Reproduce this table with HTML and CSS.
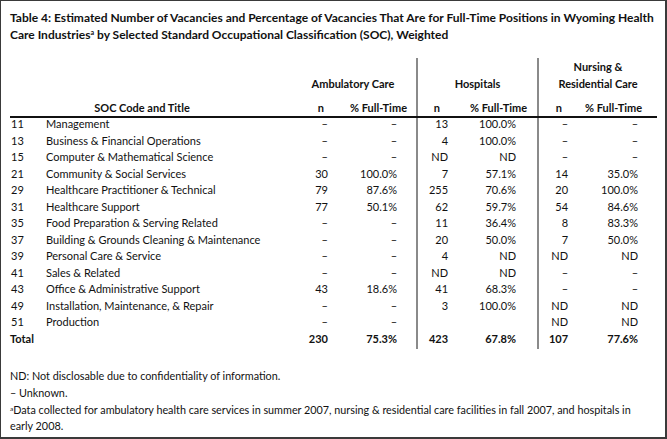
FILE: index.html
```html
<!DOCTYPE html>
<html lang="en">
<head>
<meta charset="utf-8">
<title>Table 4</title>
<link rel="stylesheet" href="styles.css">
</head>
<body>
<div class="frame">
  <h1 class="title">Table 4: Estimated Number of Vacancies and Percentage of Vacancies That Are for Full-Time Positions in Wyoming Health<br>Care Industries<sup>a</sup> by Selected Standard Occupational Classification (SOC), Weighted</h1>
  <table class="data">
    <colgroup>
      <col class="c-code"><col class="c-title"><col class="c-an"><col class="c-ap"><col class="c-hn"><col class="c-hp"><col class="c-nn"><col class="c-np">
    </colgroup>
    <thead>
      <tr class="grp">
        <th colspan="2"></th>
        <th colspan="2" class="g">Ambulatory Care</th>
        <th colspan="2" class="g sep">Hospitals</th>
        <th colspan="2" class="g sep">Nursing &amp;<br>Residential Care</th>
      </tr>
      <tr class="sub">
        <th colspan="2" class="soc">SOC Code and Title</th>
        <th class="an">n</th>
        <th class="ap">% Full-Time</th>
        <th class="hn sep">n</th>
        <th class="hp">% Full-Time</th>
        <th class="nn sep">n</th>
        <th class="np">% Full-Time</th>
      </tr>
    </thead>
    <tbody>
      <tr><td class="code">11</td><td>Management</td><td class="an">–</td><td class="ap">–</td><td class="hn sep">13</td><td class="hp">100.0%</td><td class="nn sep">–</td><td class="np">–</td></tr>
      <tr><td class="code">13</td><td>Business &amp; Financial Operations</td><td class="an">–</td><td class="ap">–</td><td class="hn sep">4</td><td class="hp">100.0%</td><td class="nn sep">–</td><td class="np">–</td></tr>
      <tr><td class="code">15</td><td>Computer &amp; Mathematical Science</td><td class="an">–</td><td class="ap">–</td><td class="hn sep">ND</td><td class="hp">ND</td><td class="nn sep">–</td><td class="np">–</td></tr>
      <tr><td class="code">21</td><td>Community &amp; Social Services</td><td class="an">30</td><td class="ap">100.0%</td><td class="hn sep">7</td><td class="hp">57.1%</td><td class="nn sep">14</td><td class="np">35.0%</td></tr>
      <tr><td class="code">29</td><td>Healthcare Practitioner &amp; Technical</td><td class="an">79</td><td class="ap">87.6%</td><td class="hn sep">255</td><td class="hp">70.6%</td><td class="nn sep">20</td><td class="np">100.0%</td></tr>
      <tr><td class="code">31</td><td>Healthcare Support</td><td class="an">77</td><td class="ap">50.1%</td><td class="hn sep">62</td><td class="hp">59.7%</td><td class="nn sep">54</td><td class="np">84.6%</td></tr>
      <tr><td class="code">35</td><td>Food Preparation &amp; Serving Related</td><td class="an">–</td><td class="ap">–</td><td class="hn sep">11</td><td class="hp">36.4%</td><td class="nn sep">8</td><td class="np">83.3%</td></tr>
      <tr><td class="code">37</td><td>Building &amp; Grounds Cleaning &amp; Maintenance</td><td class="an">–</td><td class="ap">–</td><td class="hn sep">20</td><td class="hp">50.0%</td><td class="nn sep">7</td><td class="np">50.0%</td></tr>
      <tr><td class="code">39</td><td>Personal Care &amp; Service</td><td class="an">–</td><td class="ap">–</td><td class="hn sep">4</td><td class="hp">ND</td><td class="nn sep">ND</td><td class="np">ND</td></tr>
      <tr><td class="code">41</td><td>Sales &amp; Related</td><td class="an">–</td><td class="ap">–</td><td class="hn sep">ND</td><td class="hp">ND</td><td class="nn sep">–</td><td class="np">–</td></tr>
      <tr><td class="code">43</td><td>Office &amp; Administrative Support</td><td class="an">43</td><td class="ap">18.6%</td><td class="hn sep">41</td><td class="hp">68.3%</td><td class="nn sep">–</td><td class="np">–</td></tr>
      <tr><td class="code">49</td><td>Installation, Maintenance, &amp; Repair</td><td class="an">–</td><td class="ap">–</td><td class="hn sep">3</td><td class="hp">100.0%</td><td class="nn sep">ND</td><td class="np">ND</td></tr>
      <tr><td class="code">51</td><td>Production</td><td class="an">–</td><td class="ap">–</td><td class="hn sep"></td><td class="hp"></td><td class="nn sep">ND</td><td class="np">ND</td></tr>
      <tr class="total"><td colspan="2">Total</td><td class="an">230</td><td class="ap">75.3%</td><td class="hn sep">423</td><td class="hp">67.8%</td><td class="nn sep">107</td><td class="np">77.6%</td></tr>
    </tbody>
  </table>
  <div class="notes">
    <p>ND: Not disclosable due to confidentiality of information.</p>
    <p>– Unknown.</p>
    <p><sup>a</sup>Data collected for ambulatory health care services in summer 2007, nursing &amp; residential care facilities in fall 2007, and hospitals in<br>early 2008.</p>
  </div>
</div>
</body>
</html>
```
FILE: styles.css
```css
html, body {
  margin: 0;
  padding: 0;
  background: #fff;
}
body {
  font-family: Lato, "Open Sans", sans-serif;
  color: #111;
}
.frame {
  box-sizing: border-box;
  width: 667px;
  height: 439px;
  border: 1px solid #3a3a3a;
  border-right-width: 2px;
  border-bottom-width: 2px;
  padding: 8px 9px 0 9px;
}
.title {
  margin: 0;
  font-size: 12px;
  font-weight: 700;
  line-height: 17px;
  letter-spacing: 0;
}
sup {
  font-size: 0.6em;
  line-height: 0;
  vertical-align: 0.5em;
}
.data {
  margin-top: 15px;
  border-collapse: collapse;
  table-layout: fixed;
  width: 647px;
  font-size: 11px;
}
.c-code { width: 36px; }
.c-title { width: 244px; }
.c-an { width: 50px; }
.c-ap { width: 77px; }
.c-hn { width: 53px; }
.c-hp { width: 68px; }
.c-nn { width: 47px; }
.c-np { width: 72px; }
th {
  font-weight: 700;
  padding: 0;
  white-space: nowrap;
}
.grp th {
  vertical-align: bottom;
  line-height: 17px;
  text-align: center;
  padding-bottom: 2px;
}
.sub th {
  line-height: 16px;
  height: 21px;
  box-sizing: border-box;
  padding-top: 6px;
  vertical-align: top;
  border-bottom: 2px solid #111;
}
.sub .soc {
  text-align: center;
  padding-right: 16px;
}
td {
  padding: 0;
  line-height: 12px;
  height: 16.5px;
  vertical-align: top;
  white-space: nowrap;
}
.code { padding-left: 1px; }
.an, .ap, .hn, .hp, .nn, .np { text-align: right; }
.an { padding-right: 12px; }
.ap { padding-right: 19px; }
.hn { padding-right: 22px; }
.hp { padding-right: 21px; }
.nn { padding-right: 17px; }
.np { padding-right: 19px; }
.sub .an { padding-right: 16px; }
.sub .ap { padding-right: 9px; }
.sub .hn { padding-right: 30px; }
.sub .hp { padding-right: 21px; }
.sub .nn { padding-right: 23px; }
.sub .np { padding-right: 20px; }
.sep { border-left: 2px solid #8a8a8a; }
.total td {
  font-weight: 700;
}
.notes {
  margin-top: 19px;
  font-size: 10.8px;
  line-height: 16.8px;
}
.notes p { margin: 0; }
```
